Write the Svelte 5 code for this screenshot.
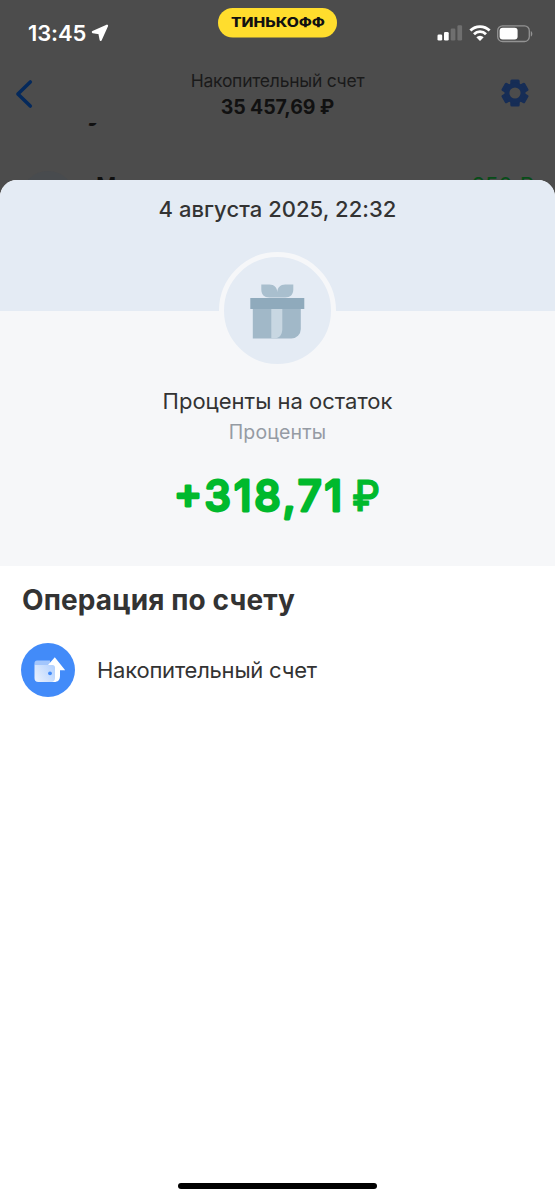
<script>
	const account = { name: "Накопительный счет", balance: "35 457,69 ₽" };

	const operation = {
		date: "4 августа 2025, 22:32",
		title: "Проценты на остаток",
		category: "Проценты",
		amount: "+318,71",
		currency: "₽"
	};
</script>

<div class="screen">
	<div class="backdrop">
		<div class="status-bar">
			<div class="clock">
				<span>13:45</span>
				<svg class="location" viewBox="0 0 18 18" aria-hidden="true">
					<path d="M16 1.7 1.9 8.1 8.4 9.2 9.7 15.9Z" fill="#fff" stroke="#fff" stroke-width="2.2" stroke-linejoin="round" />
				</svg>
			</div>
			<svg class="brand" viewBox="0 0 119 30">
				<rect width="119" height="29.5" rx="14.75" fill="#ffdd2d" />
				<text x="13" y="19" textLength="94" lengthAdjust="spacingAndGlyphs">ТИНЬКОФФ</text>
			</svg>
			<div class="indicators">
				<svg width="26" height="16" viewBox="0 0 26 16" aria-hidden="true">
					<rect x="0.5" y="9.5" width="4.7" height="6" rx="1.3" fill="#fff" />
					<rect x="7" y="7" width="4.7" height="8.5" rx="1.3" fill="#fff" />
					<rect x="13.7" y="3.5" width="4.7" height="12" rx="1.3" fill="#6f6f6f" />
					<rect x="20.4" y="0.2" width="4.7" height="15.3" rx="1.3" fill="#6f6f6f" />
				</svg>
				<svg class="wifi" width="22" height="16" viewBox="0 0 22 16" aria-hidden="true">
					<g fill="none" stroke="#fff" stroke-width="2.8">
						<path d="M1.4 5.5a13.6 13.6 0 0 1 19.2 0" />
						<path d="M5 9.2a8.5 8.5 0 0 1 12 0" />
					</g>
					<path d="M7.3 12.2a5.3 5.3 0 0 1 7.4 0L11 16Z" fill="#fff" />
				</svg>
				<svg class="battery" width="36" height="18" viewBox="0 0 36 18" aria-hidden="true">
					<rect x="0.7" y="0.9" width="31.6" height="15.6" rx="4.8" fill="none" stroke="#939393" stroke-width="1.3" />
					<rect x="2.6" y="2.8" width="18" height="11.8" rx="3" fill="#fff" />
					<path d="M33.8 6v5.6c2-.9 2-4.7 0-5.6Z" fill="#939393" />
				</svg>
			</div>
		</div>

		<div class="nav">
			<svg class="back" width="18" height="30" viewBox="0 0 18 30" aria-hidden="true">
				<path d="M15.3 2.9 2.9 15l12.4 12.1" fill="none" stroke="#04295c" stroke-width="3.5" stroke-linecap="round" stroke-linejoin="round" />
			</svg>
			<div class="nav-title">
				<p>{account.name}</p>
				<strong>{account.balance}</strong>
			</div>
			<svg class="settings" width="28" height="28" viewBox="-14 -14 28 28" aria-hidden="true">
				<g fill="#162d56">
					{#each [0, 60, 120] as angle}
						<rect x="-4.7" y="-13.5" width="9.4" height="27" rx="1.6" transform={`rotate(${angle})`} />
					{/each}
				</g>
				<circle r="8" fill="none" stroke="#162d56" stroke-width="5" />
				<circle r="5.6" fill="#4c4c4c" />
			</svg>
		</div>

		<div class="feed">
			<div class="feed-heading"><span>5 августа</span></div>
			<div class="feed-row">
				<i></i>
				<b>Мария</b>
				<span>250 ₽</span>
			</div>
		</div>
	</div>

	<main class="sheet">
		<header>
			<p>{operation.date}</p>
		</header>

		<section class="summary">
			<div class="category-icon">
				<svg width="56" height="56" viewBox="0.7 -0.5 56 56" aria-hidden="true">
					<path d="M12 1h8c5 0 8 3 8 8 0-5 3-8 8-8h8v5c0 5-3 8-8 8H20c-5 0-8-3-8-8Z" fill="#a9bfce" />
					<path d="M3.500 25h48v20.500a9.500 9.500 0 0 1-9.500 9.500H3.500Z" fill="#a1b8c8" />
					<path d="M22 25h11v20.500c0 5.800-3.200 9.500-8 9.500h-3Z" fill="#c8d7e2" />
					<path d="M1 14.500h54V25.500H1Z" fill="#8faabc" />
				</svg>
			</div>
			<h1>{operation.title}</h1>
			<p class="category">{operation.category}</p>
			<svg class="amount" width="220" height="54" viewBox="0 0 220 54">
				<text x="6" y="39" textLength="168">{operation.amount}</text>
				<text class="currency" x="184" y="39" textLength="28" lengthAdjust="spacingAndGlyphs">{operation.currency}</text>
			</svg>
		</section>

		<section class="operation">
			<h2>Операция по счету</h2>
			<div class="account">
				<svg width="54" height="54" viewBox="0 0 54 54" aria-hidden="true">
					<defs>
						<linearGradient id="wallet" x1="0" y1="0.8" x2="1" y2="0.2">
							<stop offset="0" stop-color="#e8f0fd" />
							<stop offset="1" stop-color="#b3d1fe" />
						</linearGradient>
					</defs>
					<circle cx="27" cy="27" r="27" fill="#428bf9" />
					<path d="M13.500 21v-1c0-1.500 1-2.500 2.500-2.500h13V22H14Z" fill="#a3c6fc" />
					<path d="M33.800 14.200 44.200 27.300H39v5.200c0 4.500-2 6.500-6 6.500H18V22h9Z" fill="#fff" />
					<path d="M13.500 20.500c0 1 .7 1.500 2 1.500h16c1.500 0 2.500 1 2.500 2.500V35c0 2.500-1.500 4-4 4H17.500c-2.700 0-4-1.500-4-4Z" fill="url(#wallet)" />
					<circle cx="29" cy="30.300" r="1.900" fill="#428bf9" />
				</svg>
				<span>{account.name}</span>
			</div>
		</section>

		<div class="home-indicator"></div>
	</main>
</div>

<style>
	:global(body) {
		margin: 0;
		background: #4c4c4c;
	}

	.screen {
		display: flex;
		flex-direction: column;
		width: 555px;
		height: 1200px;
		overflow: hidden;
		background: #4c4c4c;
		color: #333;
		font-family: Inter, "Liberation Sans", sans-serif;
	}

	p,
	h1,
	h2 { margin: 0; }

	svg {
		display: block;
		flex: none;
	}

	.backdrop {
		flex: none;
		height: 180px;
		overflow: hidden;
	}

	.status-bar {
		display: grid;
		grid-template-columns: 1fr 119px 1fr;
		height: 60px;
		box-sizing: border-box;
		padding: 8px 22px 0 28px;
	}

	.clock {
		display: flex;
		gap: 5px;
		margin-top: 12px;
		color: #fff;
		font-size: 22px;
		font-weight: 600;
		line-height: 26px;
		letter-spacing: -0.1px;
	}

	.location {
		width: 18px;
		height: 18px;
		margin-top: 4px;
	}

	.brand {
		width: 119px;
		height: 30px;
		margin-left: -3px;
	}

	.brand text {
		fill: #111;
		font-size: 12.5px;
		font-weight: 800;
	}

	.indicators {
		display: flex;
		justify-content: flex-end;
		gap: 6px;
		margin-top: 17px;
	}

	.nav {
		display: grid;
		grid-template-columns: 50px 1fr 50px;
		height: 63px;
		box-sizing: border-box;
		padding: 10px 15px 0;
	}

	.back { margin-top: 9px; }

	.settings {
		justify-self: end;
		margin: 9px 11px 0 0;
	}

	.nav-title {
		color: #1a1a1a;
		font-size: 17.5px;
		line-height: 21px;
		letter-spacing: -0.25px;
		text-align: center;
	}

	.nav-title strong {
		display: block;
		margin-top: 4px;
		color: #111;
		font-size: 19.5px;
		font-weight: 700;
		line-height: 24px;
		letter-spacing: -0.1px;
	}

	.feed { color: #101010; }

	.feed-heading {
		display: flex;
		align-items: flex-end;
		height: 4px;
		padding-left: 17px;
		overflow: hidden;
		font-size: 28px;
		font-weight: 700;
		line-height: 34px;
	}

	.feed-row {
		display: flex;
		height: 54px;
		margin-top: 44px;
		padding: 0 21px;
		font-size: 22px;
		line-height: 28px;
	}

	.feed-row i {
		width: 54px;
		height: 54px;
		border-radius: 50%;
		background: #484b4e;
	}

	.feed-row b {
		margin: 0 auto 0 21px;
		font-weight: 600;
	}

	.feed-row span { color: #074d18; }

	.sheet {
		display: flex;
		flex: 1;
		flex-direction: column;
		overflow: hidden;
		border-radius: 17px 17px 0 0;
		background: #fff;
	}

	header {
		height: 131px;
		box-sizing: border-box;
		padding-top: 16px;
		background: #e4ebf4;
		font-size: 22px;
		font-weight: 450;
		line-height: 27px;
		letter-spacing: 0.05px;
		text-align: center;
	}

	.summary {
		display: flex;
		flex-direction: column;
		align-items: center;
		height: 255px;
		background: #f6f7f9;
	}

	.category-icon {
		display: grid;
		place-items: center;
		width: 107px;
		height: 107px;
		margin-top: -59px;
		border: 5.5px solid #f6f7f9;
		border-radius: 50%;
		background: #e4ebf4;
	}

	.category-icon svg { margin-top: 1px; }

	h1 {
		margin-top: 18px;
		font-size: 22px;
		font-weight: 400;
		line-height: 28px;
	}

	.category {
		margin-top: 5px;
		color: #959ba4;
		font-size: 19.5px;
		line-height: 25px;
		letter-spacing: 0.15px;
	}

	.amount { margin-top: 27px; }

	.amount text {
		fill: #00b92d;
		stroke: #00b92d;
		stroke-width: 2.8px;
		stroke-linejoin: round;
		font-size: 42px;
		font-weight: 500;
	}

	.amount .currency {
		stroke-width: 1.2px;
		font-size: 43px;
	}

	.operation { padding: 17px 21px; }

	h2 {
		padding-left: 1px;
		font-size: 28px;
		font-weight: 700;
		line-height: 34px;
		letter-spacing: 0.12px;
	}

	.account {
		display: flex;
		align-items: center;
		gap: 22px;
		margin-top: 26px;
		font-size: 22px;
		letter-spacing: -0.23px;
	}

	.home-indicator {
		width: 199px;
		height: 6.5px;
		margin: auto auto 11px;
		border-radius: 4px;
		background: #000;
	}
</style>
